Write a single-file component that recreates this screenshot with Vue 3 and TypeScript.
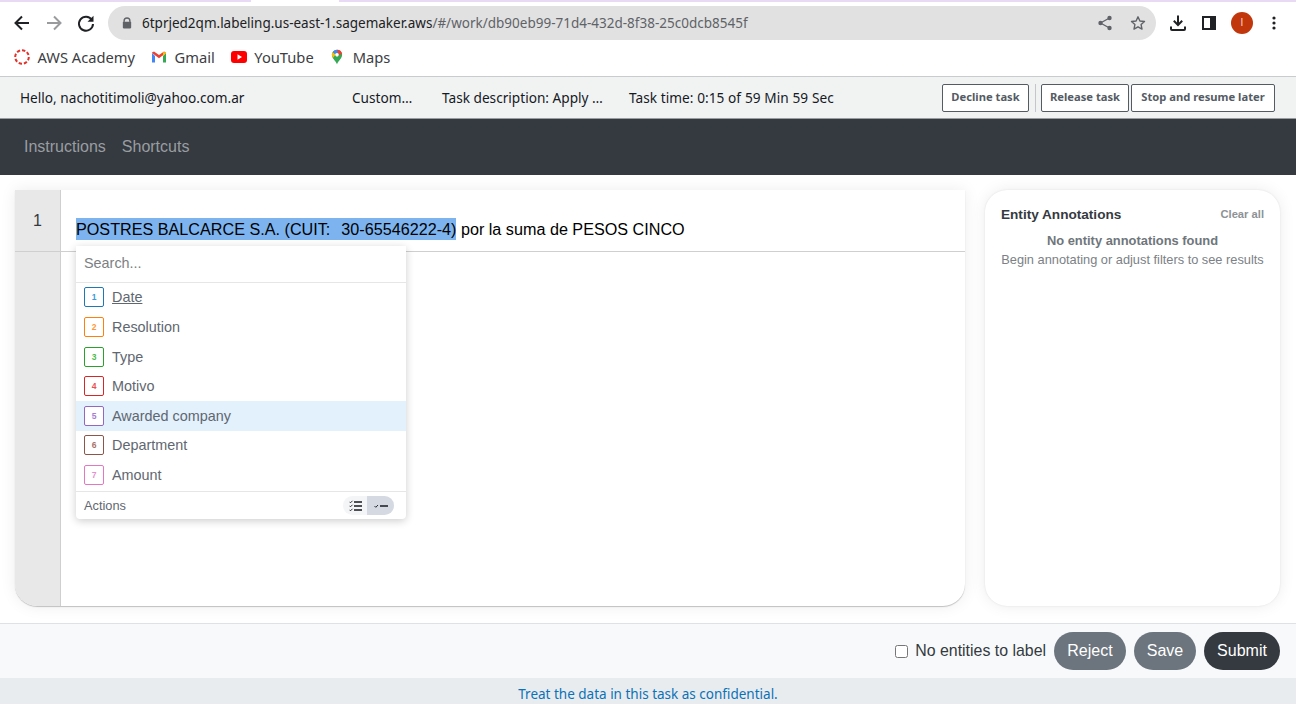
<template>
  <div class="page">
    <div class="tabstrip">
      <span class="tab-a"></span>
      <span class="tab-b"></span>
    </div>

    <div class="toolbar">
      <div class="nav-icons">
        <svg width="20" height="20" viewBox="0 0 20 20"><path d="M17 10H4M10 3.500 3.500 10l6.500 6.500" fill="none" stroke="#202124" stroke-width="2"/></svg>
        <svg width="20" height="20" viewBox="0 0 20 20"><path d="M3 10h13M10 3.500 16.500 10 10 16.500" fill="none" stroke="#9a9b9d" stroke-width="2"/></svg>
        <svg width="20" height="20" viewBox="0 0 20 20"><path d="M15.800 6.800A7 7 0 1 0 17 11" fill="none" stroke="#202124" stroke-width="2"/><path d="M17.500 2.800v6h-6z" fill="#202124"/></svg>
      </div>
      <div class="urlbar">
        <svg class="lock" width="10" height="12" viewBox="0 0 12 14"><path d="M2.500 6V4.500a3.500 3.500 0 0 1 7 0V6" fill="none" stroke="#5f6368" stroke-width="1.600"/><rect x="1" y="5.500" width="10" height="8" rx="1" fill="#5f6368"/></svg>
        <span class="url">6tprjed2qm.labeling.us-east-1.sagemaker.aws<span class="url-dim">/#/work/db90eb99-71d4-432d-8f38-25c0dcb8545f</span></span>
        <svg class="share" width="16" height="16" viewBox="0 0 16 16"><path d="M12.500 3 3.500 8l9 5" fill="none" stroke="#5f6368" stroke-width="1.300"/><circle cx="12.500" cy="3" r="2.200" fill="#5f6368"/><circle cx="3.500" cy="8" r="2.200" fill="#5f6368"/><circle cx="12.500" cy="13" r="2.200" fill="#5f6368"/></svg>
        <svg width="16" height="16" viewBox="0 0 16 16"><path d="m8 1.800 1.900 4.200 4.600.5-3.400 3.100.9 4.500L8 11.800l-4 2.300.9-4.500L1.500 6.500l4.600-.5z" fill="none" stroke="#5f6368" stroke-width="1.400" stroke-linejoin="round"/></svg>
      </div>
      <div class="ext-icons">
        <svg width="18" height="18" viewBox="0 0 18 18"><path d="M9 1.500v9.500M4.800 6.800 9 11l4.200-4.200" fill="none" stroke="#202124" stroke-width="2"/><path d="M2 12.500v2.500a1 1 0 0 0 1 1h12a1 1 0 0 0 1-1v-2.500" fill="none" stroke="#202124" stroke-width="2"/></svg>
        <svg width="14" height="14" viewBox="0 0 14 14"><rect x="1" y="1" width="12" height="12" fill="none" stroke="#202124" stroke-width="2"/><rect x="8" y="1" width="5" height="12" fill="#202124"/></svg>
        <span class="avatar">I</span>
        <svg class="dots" width="4" height="14" viewBox="0 0 4 14"><circle cx="2" cy="2" r="1.600" fill="#202124"/><circle cx="2" cy="7" r="1.600" fill="#202124"/><circle cx="2" cy="12" r="1.600" fill="#202124"/></svg>
      </div>
    </div>

    <div class="bookmarks">
      <span class="bm">
        <svg width="16" height="16" viewBox="0 0 16 16"><circle cx="8" cy="8" r="6.800" fill="none" stroke="#e2332b" stroke-width="2" stroke-dasharray="3.400 1.900"/></svg>
        AWS Academy
      </span>
      <span class="bm">
        <svg width="16" height="14" viewBox="0 0 16 14"><path d="M1 3v9.500h3V6z" fill="#4285f4"/><path d="M15 3v9.500h-3V6z" fill="#34a853"/><path d="M1 3 8 8.200 15 3v-.500L13 1.500 8 5 3 1.500 1 2.500z" fill="#ea4335"/><path d="M12 6V2.200L15 2v1z" fill="#fbbc04"/></svg>
        Gmail
      </span>
      <span class="bm">
        <svg width="16" height="12" viewBox="0 0 16 12"><rect width="16" height="12" rx="3" fill="#f00"/><path d="m6.500 3.300 4.500 2.700-4.500 2.700z" fill="#fff"/></svg>
        YouTube
      </span>
      <span class="bm maps">
        <svg width="12" height="16" viewBox="0 0 14 18"><path d="M7 17.500C5.500 13.500 1 11 1 6.500a6 6 0 0 1 12 0C13 11 8.500 13.500 7 17.500z" fill="#34a853"/><path d="M2 3.200 5.500 6 2.500 10C1.500 8.800 1 7.800 1 6.500 1 5.300 1.300 4.200 2 3.200z" fill="#fbbc04"/><path d="M2 3.200A6 6 0 0 1 7 .5L9 2.500 5.500 6z" fill="#4285f4"/><path d="M7 .5a6 6 0 0 1 6 5L9 7z" fill="#ea4335"/><circle cx="7" cy="6.500" r="2.100" fill="#fff"/></svg>
        Maps
      </span>
    </div>

    <header class="task-header">
      <span class="hello">Hello, nachotitimoli@yahoo.com.ar</span>
      <span class="meta m1">Custom…</span>
      <span class="meta m2">Task description: Apply …</span>
      <span class="meta m3">Task time: 0:15 of 59 Min 59 Sec</span>
      <div class="task-actions">
        <button class="task-btn decline">Decline task</button>
        <span class="sep"></span>
        <button class="task-btn release">Release task</button>
        <button class="task-btn stop">Stop and resume later</button>
      </div>
    </header>

    <nav class="darknav">
      <a>Instructions</a>
      <a>Shortcuts</a>
    </nav>

    <main class="workspace">
      <section class="doc">
        <div class="doc-row">
          <div class="line-no">1</div>
          <div class="line-text"><span class="sel">POSTRES BALCARCE S.A. (CUIT:<span class="gap">&nbsp; </span>30-65546222-4)</span> por la suma de PESOS CINCO</div>
        </div>
        <div class="doc-rest">
          <div class="gutter"></div>
          <div class="rest-body"></div>
        </div>

        <div class="popup">
          <div class="search">Search...</div>
          <ul class="labels">
            <li v-for="(l, i) in labels" :key="l.name" :class="{ hover: l.name === 'Awarded company' }">
              <span class="key" :style="{ borderColor: l.color, color: l.soft }">{{ i + 1 }}</span>
              <span class="name" :class="{ under: i === 0 }">{{ l.name }}</span>
            </li>
          </ul>
          <div class="popup-foot">
            <span>Actions</span>
            <div class="toggle">
              <span class="tg">
                <svg width="13" height="12" viewBox="0 0 13 12"><path d="M5 2h8M5 6h8M5 10h8" stroke="#16191f" stroke-width="1.600"/><path d="m.5 1.800 1 1L3.500.8M.5 5.800l1 1 2-2M.5 9.800l1 1 2-2" fill="none" stroke="#16191f" stroke-width=".9"/></svg>
              </span>
              <span class="tg on">
                <svg width="14" height="6" viewBox="0 0 14 6"><path d="m.5 3 1.300 1.300L4 2" fill="none" stroke="#16191f" stroke-width=".9"/><path d="M6 3h8" stroke="#16191f" stroke-width="1.400"/></svg>
              </span>
            </div>
          </div>
        </div>
      </section>

      <aside class="side">
        <div class="side-head">
          <strong>Entity Annotations</strong>
          <span class="clear">Clear all</span>
        </div>
        <div class="empty-title">No entity annotations found</div>
        <div class="empty-sub">Begin annotating or adjust filters to see results</div>
      </aside>
    </main>

    <footer class="actions">
      <label class="none-label"><input type="checkbox" /> No entities to label</label>
      <button class="pill grey r">Reject</button>
      <button class="pill grey s">Save</button>
      <button class="pill dark">Submit</button>
    </footer>

    <div class="notice">Treat the data in this task as confidential.</div>
  </div>
</template>

<script setup lang="ts">
const labels = [
  { name: 'Date', color: '#1f77b4', soft: '#3f9bd8' },
  { name: 'Resolution', color: '#ff7f0e', soft: '#ff9638' },
  { name: 'Type', color: '#2ca02c', soft: '#4dbb4d' },
  { name: 'Motivo', color: '#d62728', soft: '#ec5050' },
  { name: 'Awarded company', color: '#9467bd', soft: '#a47ed0' },
  { name: 'Department', color: '#8c564b', soft: '#a5736a' },
  { name: 'Amount', color: '#e377c2', soft: '#e690ce' },
]
</script>

<style>
html, body { margin: 0; background: #fff; overflow: hidden; }
</style>

<style scoped>
.page {
  width: 1296px;
  height: 704px;
  display: flex;
  flex-direction: column;
  overflow: hidden;
  font-family: "Liberation Sans", Arial, sans-serif;
  background: #fff;
}
.tabstrip {
  height: 2px;
  flex: none;
  display: flex;
  background: #e8daf5;
}
.tab-a { width: 251px; }
.tab-b { width: 88px; background: #fff; }

.toolbar {
  height: 41px;
  flex: none;
  display: flex;
  align-items: center;
}
.nav-icons {
  width: 108px;
  box-sizing: border-box;
  padding-left: 12px;
  display: flex;
  gap: 12px;
  flex: none;
}
.urlbar {
  width: 1048px;
  height: 34px;
  box-sizing: border-box;
  border-radius: 17px;
  background: #e1e1e1;
  display: flex;
  align-items: center;
  padding: 0 10px 0 14px;
  gap: 10px;
  flex: none;
}
.url {
  flex: 1;
  font-family: "Noto Sans", sans-serif;
  font-size: 13.500px;
  color: #202124;
}
.url-dim { color: #5f6368; }
.share { margin-right: 7px; }
.ext-icons {
  display: flex;
  align-items: center;
  margin-left: 13px;
  gap: 15px;
}
.avatar {
  width: 22px;
  height: 22px;
  border-radius: 50%;
  background: #c2360c;
  color: #f6d9cd;
  font: 10px "Liberation Sans", sans-serif;
  display: flex;
  align-items: center;
  justify-content: center;
  margin: 0 3px 0 0;
}
.dots { margin-left: 1px; }

.bookmarks {
  height: 33px;
  flex: none;
  box-sizing: border-box;
  display: flex;
  align-items: center;
  padding: 0 0 5px 14px;
  gap: 16px;
  font-family: "Noto Sans", sans-serif;
  font-size: 14.700px;
  color: #3c4043;
}
.bm {
  display: flex;
  align-items: center;
  gap: 7.500px;
}
.maps { gap: 10px; margin-left: 1px; }

.task-header {
  height: 43px;
  flex: none;
  box-sizing: border-box;
  border-top: 1px solid #c9cccc;
  border-bottom: 1px solid #9a9d9f;
  background: #f1f3f3;
  display: flex;
  align-items: center;
  padding: 0 21px 0 20px;
  font-family: "Noto Sans", sans-serif;
  font-size: 13.650px;
  color: #16191f;
}
.hello { width: 332px; flex: none; }
.m1 { width: 90px; flex: none; }
.m2 { width: 187px; flex: none; }
.m3 { word-spacing: 0.3px; }
.task-actions {
  margin-left: auto;
  display: flex;
  align-items: center;
}
.task-btn {
  height: 28px;
  box-sizing: border-box;
  border: 1px solid #545b64;
  border-radius: 2px;
  background: #fff;
  padding: 0 0 2px;
  font-family: "Noto Sans", sans-serif;
  font-size: 11.200px;
  font-weight: 700;
  color: #545b64;
}
.decline { width: 87px; }
.release { width: 88px; margin-right: 2px; }
.stop { width: 144px; }
.sep {
  width: 1px;
  height: 28px;
  background: #c4c7c7;
  margin: 0 5px 0 6px;
}

.darknav {
  height: 56px;
  flex: none;
  background: #343a40;
  display: flex;
  align-items: center;
  padding-left: 24px;
  gap: 16px;
  font-size: 16px;
  color: #9a9da0;
}

.workspace {
  flex: 1;
  min-height: 0;
  box-sizing: border-box;
  padding: 15px 16px 17px 15px;
  display: flex;
  gap: 20px;
  background: #fff;
}
.doc {
  position: relative;
  width: 950px;
  flex: none;
  border-radius: 0 0 22px 22px;
  background: #fff;
  box-shadow: 0 1px 1px rgba(0, 0, 0, 0.22), 0 0 16px rgba(0, 0, 0, 0.08);
  display: flex;
  flex-direction: column;
}
.doc-row {
  height: 61px;
  flex: none;
  display: flex;
  border-bottom: 1px solid #cfcfcf;
}
.line-no {
  width: 46px;
  flex: none;
  background: #e8e8e8;
  border-right: 1px solid #cfcfcf;
  text-align: center;
  padding-top: 22px;
  box-sizing: border-box;
  font-size: 16px;
  color: #343a40;
}
.line-text {
  padding: 30px 0 0 15px;
  font-size: 16.180px;
  line-height: 19px;
  color: #000;
}
.sel {
  background: #7db4ef;
  padding: 2px 0;
}
.gap { padding-right: 2px; }
.doc-rest {
  flex: 1;
  display: flex;
  min-height: 0;
}
.gutter {
  width: 46px;
  flex: none;
  box-sizing: border-box;
  background: #e8e8e8;
  border-right: 1px solid #cfcfcf;
  border-bottom-left-radius: 22px;
}
.rest-body { flex: 1; }

.popup {
  position: absolute;
  left: 61px;
  top: 56px;
  width: 330px;
  height: 273px;
  background: #fff;
  border-radius: 0 0 4px 4px;
  box-shadow: 0 2px 8px rgba(0, 0, 0, 0.2);
  display: flex;
  flex-direction: column;
  font-size: 14.400px;
  color: #5f6770;
}
.search {
  height: 37px;
  flex: none;
  box-sizing: border-box;
  border-bottom: 1px solid #e6e6e6;
  padding: 9px 8px 0;
  color: #7c7f83;
}
.labels {
  list-style: none;
  margin: 0;
  padding: 0;
  height: 208px;
  flex: none;
  border-bottom: 1px solid #e6e6e6;
  display: flex;
  flex-direction: column;
}
.labels li {
  height: 29.500px;
  flex: none;
  display: flex;
  align-items: center;
  padding-left: 8px;
  gap: 8px;
}
.labels li:first-child { padding-bottom: 1px; box-sizing: border-box; }
.labels li.hover { background: #e3f1fd; }
.key {
  width: 20px;
  height: 20px;
  box-sizing: border-box;
  border: 1px solid;
  border-radius: 2px;
  background: #fff;
  font-size: 8.500px;
  font-weight: 700;
  display: flex;
  align-items: center;
  justify-content: center;
}
.under { text-decoration: underline; }
.popup-foot {
  flex: 1;
  display: flex;
  align-items: center;
  justify-content: space-between;
  padding: 0 12px 0 8px;
  font-size: 12.800px;
}
.toggle {
  display: flex;
  height: 19px;
  border-radius: 10px;
  overflow: hidden;
  background: #f4f5f7;
}
.tg {
  width: 24px;
  display: flex;
  align-items: center;
  justify-content: center;
}
.tg.on { width: 27px; background: #d5dae2; }

.side {
  width: 295px;
  flex: none;
  box-sizing: border-box;
  background: #fff;
  border-radius: 22px;
  box-shadow: 0 0 2px rgba(0, 0, 0, 0.1), 0 0 16px rgba(0, 0, 0, 0.08);
  padding: 16px 16px 0;
  font-size: 13px;
  color: #7b8186;
}
.side-head {
  display: flex;
  align-items: center;
  justify-content: space-between;
  height: 16px;
  margin-bottom: 11px;
}
.side-head strong { font-size: 13.600px; color: #343a40; }
.clear { font-size: 11.200px; font-weight: 700; color: #8e9296; }
.empty-title {
  font-size: 12.900px;
  font-weight: 700;
  text-align: center;
  line-height: 16px;
  color: #6f767c;
}
.empty-sub {
  font-size: 12.800px;
  text-align: center;
  line-height: 22px;
  white-space: nowrap;
}

.actions {
  height: 55px;
  flex: none;
  box-sizing: border-box;
  border-top: 1px solid #dee2e6;
  background: #f8f9fa;
  display: flex;
  align-items: center;
  justify-content: flex-end;
  padding: 0 16px 0 0;
  gap: 8px;
}
.none-label {
  display: flex;
  align-items: center;
  font-size: 15.900px;
  color: #343a40;
}
.none-label input {
  width: 13px;
  height: 13px;
  margin: 0 7px 0 0;
}
.pill {
  height: 38px;
  border: 0;
  border-radius: 19px;
  font-family: "Liberation Sans", Arial, sans-serif;
  font-size: 16px;
  color: #fff;
  padding: 0;
}
.grey { background: #6c757d; }
.r { width: 72px; }
.s { width: 62px; }
.dark { width: 76px; background: #343a40; }

.notice {
  height: 26px;
  flex: none;
  box-sizing: border-box;
  background: #e9ecef;
  text-align: center;
  font-family: "Noto Sans", sans-serif;
  font-size: 13.500px;
  line-height: 16px;
  padding-top: 8px;
  color: #0a72b8;
}
</style>
